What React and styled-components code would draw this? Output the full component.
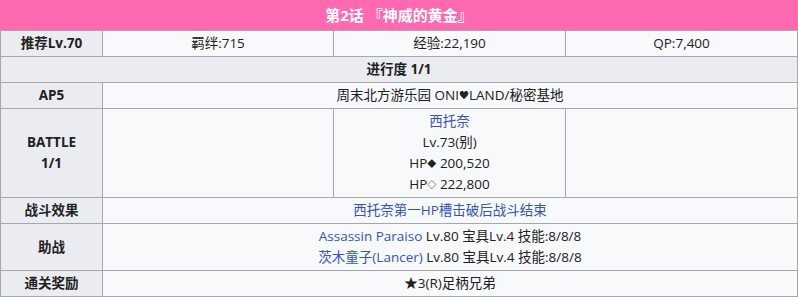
import React from 'react';
import styled, { createGlobalStyle } from 'styled-components';

const GlobalStyle = createGlobalStyle`
  html, body {
    margin: 0;
    padding: 0;
    background: #ffffff;
  }
  body {
    font-family: 'Open Sans', 'Noto Sans CJK SC', sans-serif;
    color: #202122;
  }
`;

const QuestTable = styled.table`
  width: 797px;
  border-collapse: collapse;
  table-layout: fixed;
  font-size: 13.5px;
  line-height: 21px;
  background: #f8f9fa;
  color: #202122;
`;

const TitleCell = styled.th`
  background: #ff69b0;
  color: #ffffff;
  font-size: 15px;
  font-weight: 700;
  height: 29px;
  padding: 0;
  border: 1px solid #ff69b0;
  border-bottom: 1px solid #a2a9b1;
  text-align: center;
`;

const Label = styled.th`
  background: #eaecf0;
  font-weight: 700;
  border: 1px solid #a2a9b1;
  padding: 2px 4px;
  text-align: center;
  vertical-align: middle;
`;

const Cell = styled.td`
  border: 1px solid #a2a9b1;
  padding: 2px 4px;
  text-align: center;
  vertical-align: middle;
`;

const SectionCell = styled(Label)`
  font-weight: 700;
`;

const Link = styled.a`
  color: #3355bb;
  text-decoration: none;
`;

const Line = styled.div`
  line-height: 21px;
`;

const Small = styled.span`
  font-size: ${p => p.$size || 9}px;
  vertical-align: 1px;
`;

const supports = [
  { name: 'Assassin Paraiso', detail: 'Lv.80 宝具Lv.4 技能:8/8/8' },
  { name: '茨木童子(Lancer)', detail: 'Lv.80 宝具Lv.4 技能:8/8/8' },
];

export default function App() {
  return (
    <>
      <GlobalStyle />
      <QuestTable>
        <colgroup>
          <col style={{ width: 102 }} />
          <col style={{ width: 231 }} />
          <col style={{ width: 232 }} />
          <col style={{ width: 232 }} />
        </colgroup>
        <tbody>
          <tr>
            <TitleCell colSpan={4}>第2话 『神威的黄金』</TitleCell>
          </tr>
          <tr>
            <Label>推荐Lv.70</Label>
            <Cell>羁绊:715</Cell>
            <Cell>经验:22,190</Cell>
            <Cell>QP:7,400</Cell>
          </tr>
          <tr>
            <SectionCell colSpan={4}>进行度 1/1</SectionCell>
          </tr>
          <tr>
            <Label>AP5</Label>
            <Cell colSpan={3}>
              周末北方游乐园 ONI<Small $size={10}>♥</Small>LAND/秘密基地
            </Cell>
          </tr>
          <tr>
            <Label>
              BATTLE
              <br />
              1/1
            </Label>
            <Cell />
            <Cell>
              <Line>
                <Link href="#">西托奈</Link>
              </Line>
              <Line>Lv.73(别)</Line>
              <Line>
                HP<Small>◆</Small> 200,520
              </Line>
              <Line>
                HP<Small>◇</Small> 222,800
              </Line>
            </Cell>
            <Cell />
          </tr>
          <tr>
            <Label>战斗效果</Label>
            <Cell colSpan={3}>
              <Link href="#">西托奈第一HP槽击破后战斗结束</Link>
            </Cell>
          </tr>
          <tr>
            <Label>助战</Label>
            <Cell colSpan={3}>
              {supports.map(s => (
                <Line key={s.name}>
                  <Link href="#">{s.name}</Link> {s.detail}
                </Line>
              ))}
            </Cell>
          </tr>
          <tr>
            <Label>通关奖励</Label>
            <Cell colSpan={3}>★3(R)足柄兄弟</Cell>
          </tr>
        </tbody>
      </QuestTable>
    </>
  );
}
